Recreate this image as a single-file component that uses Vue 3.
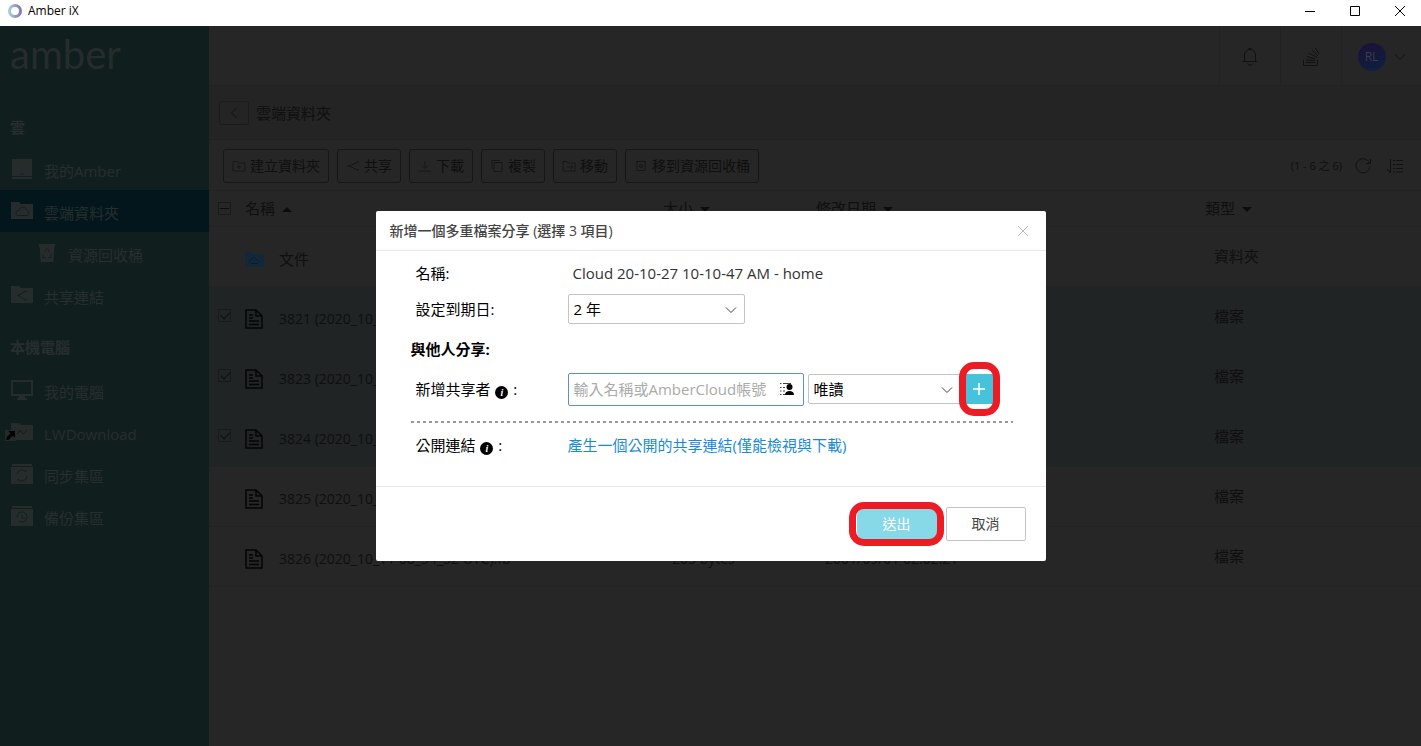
<template>
  <div class="window">

    <header class="titlebar">
      <svg class="ring" viewBox="0 0 16 16" fill="none" stroke-width="3">
        <defs>
          <linearGradient id="ringFill" x1="0" y1="0" x2="1" y2="0">
            <stop offset="0" stop-color="#a9c8e0"/>
            <stop offset="1" stop-color="#8579b5"/>
          </linearGradient>
        </defs>
        <circle cx="8" cy="8" r="5.5" stroke="url(#ringFill)"/>
      </svg>
      <span class="app-name">Amber iX</span>
      <div class="controls">
        <button aria-label="Minimize"><svg viewBox="0 0 12 12"><path d="M1 6.5h10"/></svg></button>
        <button aria-label="Maximize"><svg viewBox="0 0 12 12"><path d="M1.5 1.500h9v9h-9z"/></svg></button>
        <button aria-label="Close"><svg viewBox="0 0 12 12"><path d="M1 1l10 10M11 1L1 11"/></svg></button>
      </div>
    </header>

    <div class="shell">

      <aside class="sidebar">
        <div class="logo">amber</div>
        <nav v-for="group in groups" :key="group.title">
          <h2>{{ group.title }}</h2>
          <a
            v-for="item in group.items"
            :key="item.label"
            href="#"
            :class="{ active: item.active, sub: item.sub }"
          >
            <span class="nav-icon">
              <svg viewBox="0 0 22 20"><path :d="icons[item.icon].shape" fill-rule="evenodd"/><path class="cut" :d="icons[item.icon].cut"/></svg>
              <svg v-if="item.shortcut" class="shortcut" viewBox="0 0 10 10">
                <path d="M0 0h10v10H0z" fill="#222a2a"/>
                <path d="M3 1h6v6L7 5 3 9H1l1-3 3-3z" fill="#000"/>
              </svg>
            </span>
            <span class="nav-label">{{ item.label }}</span>
          </a>
        </nav>
      </aside>

      <main class="main">
        <div class="topbar">
          <button class="top-cell" aria-label="通知">
            <svg viewBox="0 0 18 20"><path d="M1.500 14.500h15M3.500 14.500V8a5.500 5.500 0 0 1 11 0v6.500M7.500 1.500h3M6.500 17c1 1.500 4 1.500 5 0"/></svg>
          </button>
          <button class="top-cell" aria-label="工作">
            <svg viewBox="0 0 18 20"><path d="M1.500 13v5.500h14V13M4 15.500h9M4 13l9 .5M5 9.500l8.500 2.500M7 6l8 4.500M10 3l6 6M13.500 1l3.500 6"/></svg>
          </button>
          <button class="top-cell account">
            <span class="avatar">RL</span>
            <svg class="chevron" viewBox="0 0 12 8"><path d="M1 1.500l5 5 5-5"/></svg>
          </button>
        </div>

        <div class="crumbs">
          <button class="back" aria-label="返回"><svg viewBox="0 0 8 12"><path d="M6.500 1L1.500 6l5 5"/></svg></button>
          <h1>雲端資料夾</h1>
        </div>

        <div class="toolbar">
          <button v-for="tool in tools" :key="tool.label" class="tool">
            <svg viewBox="0 0 14 12"><path :d="tool.icon"/></svg>
            <span>{{ tool.label }}</span>
          </button>
          <span class="count">(1 - 6 之 6)</span>
          <button class="plain" aria-label="重新整理">
            <svg viewBox="0 0 18 18"><path d="M15.500 6A7 7 0 1 0 16 9.500M16.500 2v4.500H12"/></svg>
          </button>
          <button class="plain" aria-label="排序">
            <svg viewBox="0 0 18 18"><path d="M4.500 2v14M1 12l3.500 4M7 3.500h2M10 3.500h7M7 7.500h2M10 7.500h7M7 11.500h2M10 11.500h7M7 15h2M10 15h7"/></svg>
          </button>
        </div>

        <table class="files">
          <thead>
            <tr>
              <th class="col-check"><input type="checkbox" class="minus" aria-label="全選"></th>
              <th>名稱<i class="arrow up"></i></th>
              <th class="col-size">大小<i class="arrow"></i></th>
              <th class="col-date">修改日期<i class="arrow"></i></th>
              <th class="col-type">類型<i class="arrow"></i></th>
            </tr>
          </thead>
          <tbody>
            <tr v-for="file in files" :key="file.name" :class="{ picked: file.picked }">
              <td class="check"><input v-if="file.picked" type="checkbox" checked :aria-label="file.name"></td>
              <td>
                <div class="name">
                  <svg v-if="file.folder" class="folder" viewBox="0 0 20 20">
                    <path d="M0 3h7l2 2h10v13H0z"/>
                    <path class="cloud" d="M6 14.500h7M4 13l5-5 5 5"/>
                  </svg>
                  <svg v-else class="doc" viewBox="0 0 20 20">
                    <path d="M1 1h10l6 6v12H1zM11 1v6h6M4 6h4M4 9h4M4 12h10M4 15.500h10"/>
                  </svg>
                  <span :class="{ latin: !file.folder }">{{ file.name }}</span>
                </div>
              </td>
              <td class="latin">{{ file.size }}</td>
              <td class="latin">{{ file.date }}</td>
              <td>{{ file.folder ? '資料夾' : '檔案' }}</td>
            </tr>
          </tbody>
        </table>
      </main>

      <div class="overlay">
        <form class="dialog" role="dialog" aria-labelledby="dialogTitle" @submit.prevent>
          <div class="dialog-head">
            <h2 id="dialogTitle">新增一個多重檔案分享 (選擇 3 項目)</h2>
            <button type="button" class="close" aria-label="關閉">
              <svg viewBox="0 0 12 12"><path d="M1 1l10 10M11 1L1 11"/></svg>
            </button>
          </div>

          <div class="dialog-body">
            <div class="field">
              <span class="label">名稱:</span>
              <span class="share-name">Cloud 20-10-27 10-10-47 AM - home</span>
            </div>
            <div class="field">
              <label class="label" for="expire">設定到期日:</label>
              <div class="select expire">
                <select id="expire"><option>2 年</option></select>
                <svg viewBox="0 0 12 8"><path d="M1 1.500l5 5 5-5"/></svg>
              </div>
            </div>
            <h3>與他人分享:</h3>
            <div class="field">
              <label class="label" for="sharer">新增共享者 <i class="info">i</i> :</label>
              <div class="sharer">
                <input id="sharer" type="text" placeholder="輸入名稱或AmberCloud帳號">
                <svg viewBox="0 0 16 14">
                  <path d="M1 1.500h1.500M4 1.500h8M1 5.500h1.500M4 5.500h2M1 9h1.500M4 9h2M1 12.500h1.500M4 12.500h2" stroke="#444" stroke-width="1.200"/>
                  <circle cx="10.500" cy="5" r="3"/>
                  <path d="M6 13c0-3 2-4 4.500-4s4.500 1 4.500 4z"/>
                </svg>
              </div>
              <div class="select access">
                <select aria-label="權限"><option>唯讀</option></select>
                <svg viewBox="0 0 12 8"><path d="M1 1.500l5 5 5-5"/></svg>
              </div>
              <button type="button" class="add marked" aria-label="新增">
                <svg viewBox="0 0 14 14"><path d="M7 1v12M1 7h12"/></svg>
              </button>
            </div>
            <div class="dashes"></div>
            <div class="field">
              <span class="label">公開連結 <i class="info">i</i> :</span>
              <a class="public-link" href="#">產生一個公開的共享連結(僅能檢視與下載)</a>
            </div>
          </div>

          <div class="dialog-foot">
            <button type="submit" class="submit marked">送出</button>
            <button type="button" class="cancel">取消</button>
          </div>
        </form>
      </div>

    </div>
  </div>
</template>

<script setup>
const folder = 'M0 1h8l2 2h12v15H0z'

const icons = {
  drive: { shape: 'M1 0h20v20H1z', cut: 'M1 17.500h20M9 15h4' },
  cloud: { shape: folder, cut: 'M7 14.500h8a2.500 2.500 0 0 0 1-5c-1-4-7-5-8 0a2.500 2.500 0 0 0-1 5z' },
  bin: { shape: 'M2 0h18v3H2zM3 3h16l-1 17H4z', cut: 'M8 9l3-4 3 4M15 11l1 4h-4M10 15H6l1-4' },
  share: { shape: folder, cut: 'M15 6l-8 4.500 8 4.500M14 6h2M6 10.500h2M14 15h2' },
  computer: { shape: 'M0 0h22v16h-8v2h2v2H6v-2h2v-2H0zM2 2v12h18V2z', cut: '' },
  link: { shape: folder, cut: 'M6 12l3-3 3 3 4-4M7 9h4' },
  sync: { shape: 'M1 0h20v2H1zM0 3h22v17H0z', cut: 'M6 10a5 5 0 0 1 9-2v-2M16 12a5 5 0 0 1-9 3v2' },
  backup: { shape: 'M1 0h20v2H1zM0 3h22v17H0z', cut: 'M6 11a5 5 0 1 1 2 4M11 8v4h3' }
}

const groups = [
  {
    title: '雲',
    items: [
      { label: '我的Amber', icon: 'drive' },
      { label: '雲端資料夾', icon: 'cloud', active: true },
      { label: '資源回收桶', icon: 'bin', sub: true },
      { label: '共享連結', icon: 'share' }
    ]
  },
  {
    title: '本機電腦',
    items: [
      { label: '我的電腦', icon: 'computer' },
      { label: 'LWDownload', icon: 'link', shortcut: true },
      { label: '同步集區', icon: 'sync' },
      { label: '備份集區', icon: 'backup' }
    ]
  }
]

const tools = [
  { label: '建立資料夾', icon: 'M1 1.500h4l1 1.500h7v8H1zM7 5v4M5 7h4' },
  { label: '共享', icon: 'M12 2L3 6l9 4M1 6h3M11 2h2M11 10h2' },
  { label: '下載', icon: 'M7 1v7M4 5.500l3 3 3-3M1 11h12' },
  { label: '複製', icon: 'M4 2.500h8v9H4zM2 9V.500h8' },
  { label: '移動', icon: 'M1 1.500h4l1 1.500h7v8H1zM5 7h6M9 5l2 2-2 2' },
  { label: '移到資源回收桶', icon: 'M2 1.500h10M3 1.500v9h8v-9M5.500 6a1.500 1.500 0 1 0 3 0 1.500 1.500 0 1 0-3 0' }
]

const stamp = '2001/09/01 02:02:21'

const files = [
  { name: '文件', folder: true },
  { name: '3821 (2020_10_11 08_54_52 UTC).fb', size: '205 bytes', date: stamp, picked: true },
  { name: '3823 (2020_10_11 08_54_52 UTC).fb', size: '205 bytes', date: stamp, picked: true },
  { name: '3824 (2020_10_11 08_54_52 UTC).fb', size: '205 bytes', date: stamp, picked: true },
  { name: '3825 (2020_10_11 08_54_52 UTC).fb', size: '205 bytes', date: stamp },
  { name: '3826 (2020_10_11 08_54_52 UTC).fb', size: '205 bytes', date: stamp }
]
</script>

<style>
body {
  background: #262626;
}
</style>

<style scoped>
.window {
  min-height: 100vh;
  display: flex;
  flex-direction: column;
  font-family: 'Open Sans', 'Noto Sans CJK TC', sans-serif;
  font-size: 15px;
  line-height: 20px;
  color: #0f0f0f;
}

.window * { box-sizing: border-box; }

button {
  font: inherit;
  color: inherit;
  background: none;
  border: 0;
  padding: 0;
  cursor: pointer;
}

svg {
  display: block;
  flex: none;
}

h1, h2, h3 {
  margin: 0;
  font-size: 15px;
  font-weight: 400;
}

/* Title bar */
.titlebar {
  display: flex;
  align-items: center;
  height: 26px;
  padding: 0 11px 5px 7px;
  gap: 5px;
  background: #fff;
  color: #000;
  font-size: 12px;
}

.ring { width: 16px; height: 16px; }

.controls {
  display: flex;
  gap: 33px;
  margin-left: auto;
  margin-right: 4px;
}

.controls svg {
  width: 12px;
  height: 12px;
  fill: none;
  stroke: #000;
}

.shell {
  position: relative;
  flex: 1;
  display: flex;
}

/* Sidebar */
.sidebar {
  width: 209px;
  flex: none;
  background: #111e1e;
  color: #272e2e;
}

.logo {
  height: 80px;
  padding: 8px 10px;
  font-family: Lato, sans-serif;
  font-size: 40px;
  line-height: 40px;
  color: #252c2c;
}

.sidebar h2 {
  padding: 11px 10px;
  font-weight: 700;
}

.sidebar nav + nav h2 { padding: 21px 10px 12px; }

.sidebar a {
  display: flex;
  align-items: center;
  gap: 11px;
  height: 42px;
  padding: 0 11px;
  color: inherit;
  text-decoration: none;
}

.sidebar a.active { background: #03161b; }

.sidebar a.sub { padding-left: 37px; }

.nav-label { padding-top: 4px; }

.nav-icon { position: relative; }

.nav-icon svg {
  width: 22px;
  height: 20px;
  fill: #262c2c;
}

.sub .nav-icon svg { width: 20px; }

.nav-icon .cut {
  fill: none;
  stroke: #151e1e;
}

.nav-icon .shortcut {
  position: absolute;
  left: -6px;
  bottom: 1px;
  width: 11px;
  height: 11px;
}

/* Main area */
.main {
  flex: 1;
  min-width: 0;
}

.main svg {
  fill: none;
  stroke: #111;
}

.topbar {
  display: flex;
  justify-content: flex-end;
  height: 60px;
  border-bottom: 1px solid #212121;
}

.top-cell {
  display: flex;
  align-items: center;
  justify-content: center;
  width: 61px;
  padding-top: 2px;
  border-left: 1px solid #222;
}

.top-cell svg { width: 18px; height: 20px; }

.account { width: 80px; gap: 8px; }

.avatar {
  width: 28px;
  height: 28px;
  border-radius: 50%;
  background: linear-gradient(160deg, #1b1038, #0e2140);
  color: #3c3c4a;
  font-size: 12px;
  line-height: 28px;
}

.main .chevron { width: 12px; height: 8px; }

.crumbs {
  display: flex;
  align-items: center;
  gap: 7px;
  height: 54px;
  padding-left: 10px;
  background: #242424;
  border-bottom: 1px solid #212121;
}

.back {
  display: flex;
  align-items: center;
  justify-content: center;
  width: 30px;
  height: 24px;
  border: 1px solid #1c1c1c;
  border-radius: 2px;
}

.back svg { width: 8px; height: 12px; }

.toolbar {
  display: flex;
  align-items: center;
  gap: 8px;
  height: 51px;
  padding: 2px 17px 0 14px;
  border-bottom: 1px solid #222;
}

.tool {
  display: flex;
  align-items: center;
  gap: 4px;
  height: 34px;
  padding: 0 8px;
  border: 1px solid #171717;
  border-radius: 3px;
  font-size: 14px;
  white-space: nowrap;
}

.tool svg { width: 14px; height: 12px; stroke: #161616; }

.count {
  margin-left: auto;
  margin-right: 4px;
  font-size: 11px;
}

.plain svg { width: 18px; height: 18px; }

.plain + .plain { margin-left: 6px; }

/* File list */
.files {
  width: 100%;
  table-layout: fixed;
  border-collapse: collapse;
}

.files th {
  height: 35px;
  padding: 0;
  text-align: left;
  font-weight: 400;
  border-bottom: 1px solid #222;
}

.col-check { width: 36px; }
.col-size { width: 153px; }
.col-date { width: 389px; }
.col-type { width: 216px; }

.arrow {
  display: inline-block;
  margin-left: 7px;
  vertical-align: 2px;
  border: 5px solid transparent;
  border-top-color: #0c0c0c;
  border-bottom: 0;
}

.arrow.up {
  border: 5px solid transparent;
  border-bottom-color: #0c0c0c;
  border-top: 0;
}

.files td {
  height: 60px;
  padding: 0 0 0 9px;
  border-bottom: 1px solid #232323;
}

.files td:nth-child(2) { padding: 5px 0 0; }

.files td.latin { padding-top: 5px; }

.files td.check { padding-bottom: 2px; }

.files th.col-check { padding-left: 9px; }

.picked { background: #202425; }

.files .picked td { border-color: #202425; }

.files input {
  appearance: none;
  display: block;
  width: 13px;
  height: 13px;
  margin: 0;
  border: 1px solid #1a1a1a;
  position: relative;
}

.files input:checked::after {
  content: '';
  position: absolute;
  left: 2px;
  top: 2px;
  width: 8px;
  height: 4px;
  border: solid #101010;
  border-width: 0 0 1px 1px;
  transform: rotate(-45deg);
}

.files .minus::after {
  content: '';
  position: absolute;
  left: 1px;
  right: 1px;
  top: 5px;
  border-top: 1px solid #0c0c0c;
}

.latin { font-size: 14px; }

.name {
  display: flex;
  align-items: center;
  gap: 14px;
}

.name svg { width: 20px; height: 20px; }

.name .doc { stroke: #050505; stroke-width: 1.5; }

.name .folder { fill: #12283a; stroke: none; }

.name .cloud { fill: none; stroke: #0d1c2a; }

/* Share dialog */
.overlay {
  position: absolute;
  inset: 0;
  display: flex;
  align-items: center;
  justify-content: center;
}

.dialog {
  width: 670px;
  max-width: 100%;
  border-radius: 2px;
  background: #fff;
  color: #000;
}

.dialog-head {
  display: flex;
  align-items: center;
  justify-content: space-between;
  height: 40px;
  padding: 0 17px 0 14px;
  border-bottom: 1px solid #e8e8e8;
}

.dialog-head h2 {
  font-size: 14px;
  font-weight: 500;
  color: #444;
}

.close svg {
  width: 12px;
  height: 12px;
  fill: none;
  stroke: #bbb;
}

.dialog-body { padding: 4px 33px 23px 35px; }

.field {
  display: flex;
  align-items: center;
  min-height: 36px;
  padding-left: 5px;
}

.label { width: 152px; }

.share-name {
  padding-left: 5px;
  color: #333;
}

.info {
  display: inline-block;
  width: 13px;
  height: 13px;
  margin: 0 1px;
  border-radius: 50%;
  background: #000;
  color: #fff;
  font: italic 700 10px/13px 'Liberation Serif', serif;
  text-align: center;
  vertical-align: -1px;
}

.select { position: relative; }

.select select {
  appearance: none;
  width: 100%;
  height: 30px;
  padding: 0 5px;
  border: 1px solid #c4c4c4;
  border-radius: 2px;
  background: #fff;
  color: #000;
  font: inherit;
}

.select svg {
  position: absolute;
  right: 8px;
  top: 12px;
  width: 12px;
  height: 8px;
  fill: none;
  stroke: #444;
  pointer-events: none;
}

.expire { width: 177px; }

.access {
  width: 158px;
  margin-left: 4px;
}

.access svg { right: 13px; }

.dialog h3 {
  padding: 12px 0;
  font-weight: 700;
}

.sharer {
  display: flex;
  align-items: center;
  width: 236px;
  height: 33px;
  padding: 0 8px 0 5px;
  border: 1px solid #5b8fd0;
  border-radius: 2px;
}

.sharer input {
  flex: 1;
  min-width: 0;
  padding: 0;
  border: 0;
  outline: 0;
  background: none;
  font: inherit;
}

.sharer input::placeholder { color: #aaa; }

.sharer svg { width: 16px; height: 14px; }

.add {
  display: flex;
  align-items: center;
  justify-content: center;
  width: 27px;
  height: 30px;
  background: #46c3da;
}

.add svg {
  width: 14px;
  height: 14px;
  fill: none;
  stroke: #fff;
  stroke-width: 1.5;
}

/* Red frame round the highlighted buttons */
.marked { position: relative; }

.marked::after {
  content: '';
  position: absolute;
  border: 7px solid #ec1c24;
  border-radius: 15px;
}

.add.marked::after { inset: -12px -7px; }

.submit.marked::after { inset: -6px -7px -6px -8px; }

.dashes {
  height: 2px;
  margin: 14px 0 4px;
  background: repeating-linear-gradient(90deg, #999 0 3px, transparent 3px 6px);
}

.public-link {
  color: #1a8ad8;
  text-decoration: none;
}

.dialog-foot {
  display: flex;
  justify-content: flex-end;
  align-items: center;
  gap: 9px;
  height: 75px;
  padding: 0 20px;
  border-top: 1px solid #e8e8e8;
}

.submit {
  width: 80px;
  height: 32px;
  border-radius: 8px;
  background: #88d9e7;
  color: #fff;
  font-size: 14px;
}

.cancel {
  width: 80px;
  height: 34px;
  border: 1px solid #c4c4c4;
  border-radius: 2px;
  color: #444;
  font-size: 14px;
}
</style>
